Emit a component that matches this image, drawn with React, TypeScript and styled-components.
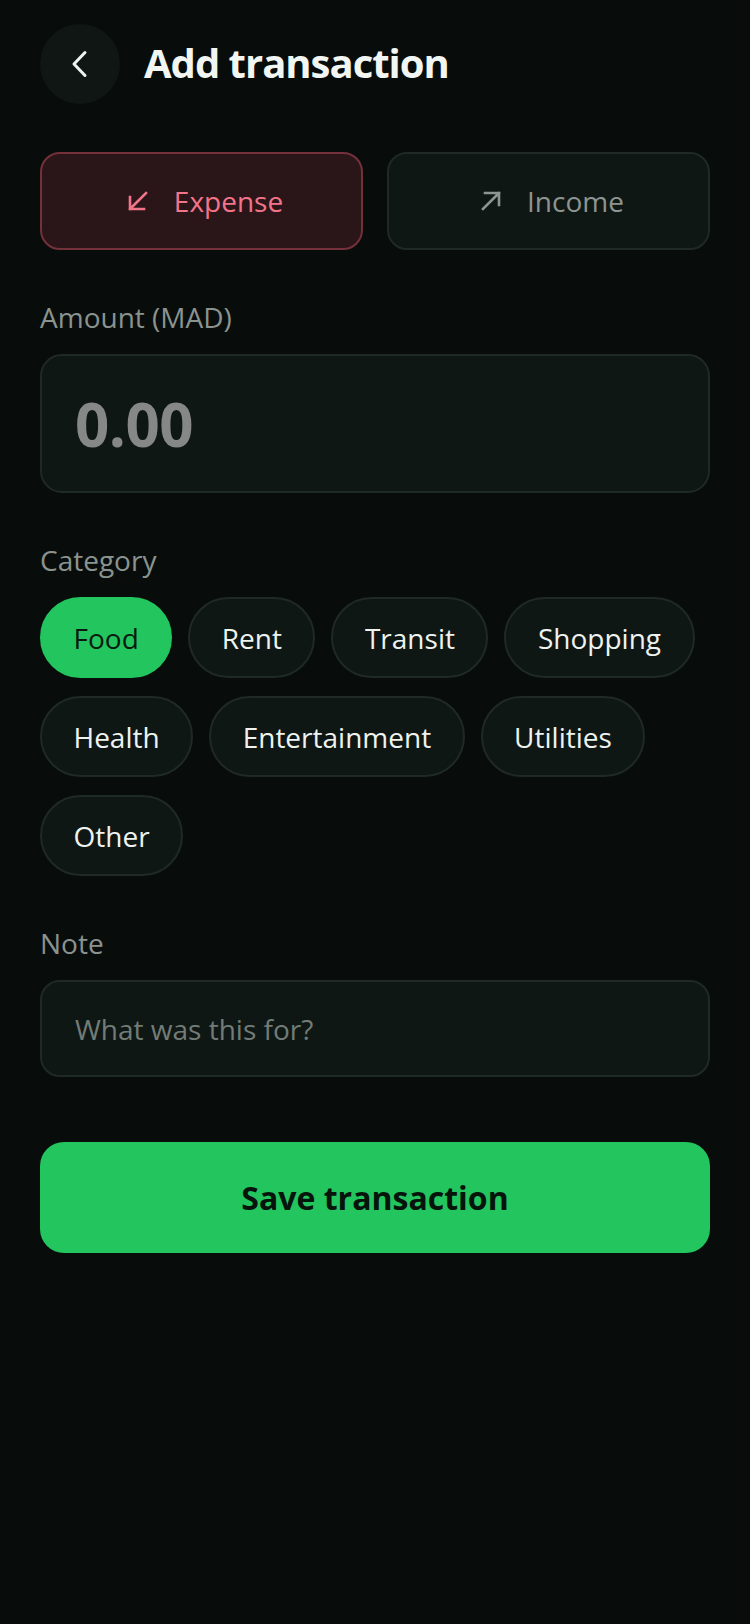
import React, { useState } from "react";
import styled, { createGlobalStyle } from "styled-components";

const Global = createGlobalStyle`
  html, body { margin: 0; padding: 0; background: #080d0c; }
  body { font-family: "Open Sans", "Noto Sans", sans-serif; color: #eef3f0; }
  * { box-sizing: border-box; }
`;

const Page = styled.div`
  min-height: 1624px;
  background: #080d0c;
  padding: 24px 40px 40px;
  display: flex;
  flex-direction: column;
`;

const Header = styled.header`
  display: flex;
  align-items: center;
  gap: 24px;
  height: 80px;
`;

const BackButton = styled.button`
  width: 80px;
  height: 80px;
  border-radius: 50%;
  border: none;
  background: #101614;
  display: flex;
  align-items: center;
  justify-content: center;
  padding: 0;
  cursor: pointer;
`;

const Title = styled.h1`
  margin: 0 0 4px;
  font-size: 40px;
  font-weight: 700;
  letter-spacing: -1px;
  color: #f1f6f3;
`;

const ToggleRow = styled.div`
  display: grid;
  grid-template-columns: 1fr 1fr;
  gap: 24px;
  margin-top: 48px;
`;

const ToggleButton = styled.button<{ $active: boolean }>`
  height: 98px;
  border-radius: 20px;
  border: 2px solid ${(p) => (p.$active ? "#74303b" : "#1f2925")};
  background: ${(p) => (p.$active ? "#2a1519" : "#0f1714")};
  color: ${(p) => (p.$active ? "#f27488" : "#8c9591")};
  font-family: inherit;
  font-size: 28px;
  display: flex;
  align-items: center;
  justify-content: center;
  gap: 25px;
  padding: 0 0 0 7px;
`;

const Section = styled.section`
  margin-top: 48px;
  display: flex;
  flex-direction: column;
`;

const Label = styled.label`
  font-size: 28px;
  line-height: 38px;
  color: #8b938f;
  margin-bottom: 18px;
`;

const AmountBox = styled.div`
  height: 139px;
  border-radius: 22px;
  border: 2px solid #1f2925;
  background: #0f1714;
  display: flex;
  align-items: center;
  padding: 0 33px;
`;

const AmountText = styled.span`
  font-size: 60px;
  font-weight: 700;
  color: #858886;
  letter-spacing: -0.5px;
`;

const Chips = styled.div`
  display: flex;
  flex-wrap: wrap;
  column-gap: 16px;
  row-gap: 18px;
`;

const Chip = styled.button<{ $active: boolean }>`
  height: 81px;
  border-radius: 41px;
  border: 2px solid ${(p) => (p.$active ? "#22c55e" : "#1f2925")};
  background: ${(p) => (p.$active ? "#22c55e" : "#0f1714")};
  color: ${(p) => (p.$active ? "#0a1a0f" : "#eef3f0")};
  font-family: inherit;
  font-size: 28px;
  padding: 0 31.5px;
  display: flex;
  align-items: center;
`;

const NoteInput = styled.div`
  height: 97px;
  border-radius: 20px;
  border: 2px solid #1f2925;
  background: #0f1714;
  display: flex;
  align-items: center;
  padding: 0 33px;
  font-size: 28px;
  color: #727c77;
`;

const SaveButton = styled.button`
  margin-top: 65px;
  height: 111px;
  border-radius: 24px;
  border: none;
  background: #22c55e;
  color: #06140b;
  font-family: inherit;
  font-size: 32px;
  font-weight: 700;
`;

const ChevronLeft = () => (
  <svg width="28" height="28" viewBox="0 0 28 28" fill="none">
    <polyline
      points="19,2.5 8,14 19,25.5"
      stroke="#eef3f0"
      strokeWidth="3"
      strokeLinecap="round"
      strokeLinejoin="round"
    />
  </svg>
);

const ArrowDownLeft = ({ color }: { color: string }) => (
  <svg width="22" height="22" viewBox="0 0 22 22" fill="none">
    <path
      d="M19 3 L3 19 M3 7 V19 H17"
      stroke={color}
      strokeWidth="2.6"
      strokeLinecap="square"
      strokeLinejoin="miter"
    />
  </svg>
);

const ArrowUpRight = ({ color }: { color: string }) => (
  <svg width="22" height="22" viewBox="0 0 22 22" fill="none">
    <path
      d="M3 19 L19 3 M5 3 H19 V15"
      stroke={color}
      strokeWidth="2.6"
      strokeLinecap="square"
      strokeLinejoin="miter"
    />
  </svg>
);

const categories = [
  "Food",
  "Rent",
  "Transit",
  "Shopping",
  "Health",
  "Entertainment",
  "Utilities",
  "Other",
];

export default function App() {
  const [type, setType] = useState<"expense" | "income">("expense");
  const [cat, setCat] = useState("Food");
  return (
    <>
      <Global />
      <Page>
        <Header>
          <BackButton aria-label="Back">
            <ChevronLeft />
          </BackButton>
          <Title>Add transaction</Title>
        </Header>

        <ToggleRow>
          <ToggleButton
            $active={type === "expense"}
            onClick={() => setType("expense")}
          >
            <ArrowDownLeft color={type === "expense" ? "#f27488" : "#8c9591"} />
            Expense
          </ToggleButton>
          <ToggleButton
            $active={type === "income"}
            onClick={() => setType("income")}
          >
            <ArrowUpRight color={type === "income" ? "#f27488" : "#8c9591"} />
            Income
          </ToggleButton>
        </ToggleRow>

        <Section>
          <Label>Amount (MAD)</Label>
          <AmountBox>
            <AmountText>0.00</AmountText>
          </AmountBox>
        </Section>

        <Section>
          <Label>Category</Label>
          <Chips>
            {categories.map((c) => (
              <Chip key={c} $active={c === cat} onClick={() => setCat(c)}>
                {c}
              </Chip>
            ))}
          </Chips>
        </Section>

        <Section>
          <Label>Note</Label>
          <NoteInput>What was this for?</NoteInput>
        </Section>

        <SaveButton>Save transaction</SaveButton>
      </Page>
    </>
  );
}
